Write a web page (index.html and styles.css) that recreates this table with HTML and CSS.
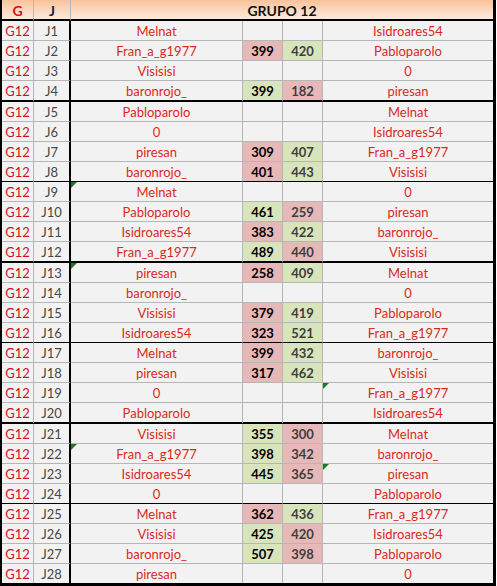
FILE: index.html
```html
<!DOCTYPE html>
<html lang="es">
<head>
<meta charset="utf-8">
<title>Grupo 12</title>
<link rel="stylesheet" href="styles.css">
</head>
<body>
<div class="sheet">
  <div class="row head">
    <div class="c hg">G</div>
    <div class="c hj">J</div>
    <div class="c ht">GRUPO 12</div>
  </div>

  <div class="row"><div class="c g">G12</div><div class="c j">J1</div><div class="c n">Melnat</div><div class="c s s1"></div><div class="c s s2"></div><div class="c n a">Isidroares54</div></div>
  <div class="row"><div class="c g">G12</div><div class="c j">J2</div><div class="c n">Fran_a_g1977</div><div class="c s s1 lo">399</div><div class="c s s2 hi">420</div><div class="c n a">Pabloparolo</div></div>
  <div class="row"><div class="c g">G12</div><div class="c j">J3</div><div class="c n">Visisisi</div><div class="c s s1"></div><div class="c s s2"></div><div class="c n a">0</div></div>
  <div class="row thick"><div class="c g">G12</div><div class="c j">J4</div><div class="c n">baronrojo_</div><div class="c s s1 hi">399</div><div class="c s s2 lo">182</div><div class="c n a">piresan</div></div>

  <div class="row"><div class="c g">G12</div><div class="c j">J5</div><div class="c n">Pabloparolo</div><div class="c s s1"></div><div class="c s s2"></div><div class="c n a">Melnat</div></div>
  <div class="row"><div class="c g">G12</div><div class="c j">J6</div><div class="c n">0</div><div class="c s s1"></div><div class="c s s2"></div><div class="c n a">Isidroares54</div></div>
  <div class="row"><div class="c g">G12</div><div class="c j">J7</div><div class="c n">piresan</div><div class="c s s1 lo">309</div><div class="c s s2 hi">407</div><div class="c n a">Fran_a_g1977</div></div>
  <div class="row thin"><div class="c g">G12</div><div class="c j">J8</div><div class="c n">baronrojo_</div><div class="c s s1 lo">401</div><div class="c s s2 hi">443</div><div class="c n a">Visisisi</div></div>

  <div class="row"><div class="c g">G12</div><div class="c j">J9</div><div class="c n note">Melnat</div><div class="c s s1"></div><div class="c s s2"></div><div class="c n a">0</div></div>
  <div class="row"><div class="c g">G12</div><div class="c j">J10</div><div class="c n">Pabloparolo</div><div class="c s s1 hi">461</div><div class="c s s2 lo">259</div><div class="c n a">piresan</div></div>
  <div class="row"><div class="c g">G12</div><div class="c j">J11</div><div class="c n">Isidroares54</div><div class="c s s1 lo">383</div><div class="c s s2 hi">422</div><div class="c n a">baronrojo_</div></div>
  <div class="row thick"><div class="c g">G12</div><div class="c j">J12</div><div class="c n">Fran_a_g1977</div><div class="c s s1 hi">489</div><div class="c s s2 lo">440</div><div class="c n a">Visisisi</div></div>

  <div class="row"><div class="c g">G12</div><div class="c j">J13</div><div class="c n note">piresan</div><div class="c s s1 lo">258</div><div class="c s s2 hi">409</div><div class="c n a">Melnat</div></div>
  <div class="row"><div class="c g">G12</div><div class="c j">J14</div><div class="c n">baronrojo_</div><div class="c s s1"></div><div class="c s s2"></div><div class="c n a">0</div></div>
  <div class="row"><div class="c g">G12</div><div class="c j">J15</div><div class="c n">Visisisi</div><div class="c s s1 lo">379</div><div class="c s s2 hi">419</div><div class="c n a">Pabloparolo</div></div>
  <div class="row thin"><div class="c g">G12</div><div class="c j">J16</div><div class="c n">Isidroares54</div><div class="c s s1 lo">323</div><div class="c s s2 hi">521</div><div class="c n a">Fran_a_g1977</div></div>

  <div class="row"><div class="c g">G12</div><div class="c j">J17</div><div class="c n">Melnat</div><div class="c s s1 lo">399</div><div class="c s s2 hi">432</div><div class="c n a">baronrojo_</div></div>
  <div class="row"><div class="c g">G12</div><div class="c j">J18</div><div class="c n">piresan</div><div class="c s s1 lo">317</div><div class="c s s2 hi">462</div><div class="c n a">Visisisi</div></div>
  <div class="row"><div class="c g">G12</div><div class="c j">J19</div><div class="c n">0</div><div class="c s s1"></div><div class="c s s2"></div><div class="c n a note">Fran_a_g1977</div></div>
  <div class="row thick"><div class="c g">G12</div><div class="c j">J20</div><div class="c n">Pabloparolo</div><div class="c s s1"></div><div class="c s s2"></div><div class="c n a">Isidroares54</div></div>

  <div class="row"><div class="c g">G12</div><div class="c j">J21</div><div class="c n">Visisisi</div><div class="c s s1 hi">355</div><div class="c s s2 lo">300</div><div class="c n a">Melnat</div></div>
  <div class="row"><div class="c g">G12</div><div class="c j">J22</div><div class="c n note">Fran_a_g1977</div><div class="c s s1 hi">398</div><div class="c s s2 lo">342</div><div class="c n a">baronrojo_</div></div>
  <div class="row"><div class="c g">G12</div><div class="c j">J23</div><div class="c n">Isidroares54</div><div class="c s s1 hi">445</div><div class="c s s2 lo">365</div><div class="c n a note">piresan</div></div>
  <div class="row thin"><div class="c g">G12</div><div class="c j">J24</div><div class="c n">0</div><div class="c s s1"></div><div class="c s s2"></div><div class="c n a">Pabloparolo</div></div>

  <div class="row"><div class="c g">G12</div><div class="c j">J25</div><div class="c n">Melnat</div><div class="c s s1 lo">362</div><div class="c s s2 hi">436</div><div class="c n a">Fran_a_g1977</div></div>
  <div class="row"><div class="c g">G12</div><div class="c j">J26</div><div class="c n">Visisisi</div><div class="c s s1 hi">425</div><div class="c s s2 lo">420</div><div class="c n a">Isidroares54</div></div>
  <div class="row"><div class="c g">G12</div><div class="c j">J27</div><div class="c n">baronrojo_</div><div class="c s s1 hi">507</div><div class="c s s2 lo">398</div><div class="c n a">Pabloparolo</div></div>
  <div class="row last"><div class="c g">G12</div><div class="c j">J28</div><div class="c n">piresan</div><div class="c s s1"></div><div class="c s s2"></div><div class="c n a">0</div></div>
</div>
</body>
</html>
```

FILE: styles.css
```css
html, body {
  margin: 0;
  padding: 0;
  background: #ffffff;
}

.sheet {
  width: 491px;
  border-left: 2px solid #000;
  border-right: 3px solid #000;
  border-bottom: 3px solid #000;
  font-family: Lato, "Noto Sans", "Liberation Sans", sans-serif;
  font-size: 13px;
}

.row {
  display: grid;
  grid-template-columns: 32px 37px 172px 40px 40px 170px;
}

.c {
  height: 17px;
  padding-top: 2px;
  line-height: 17px;
  text-align: center;
  white-space: nowrap;
  overflow: hidden;
  background: #f2f2f2;
  border-right: 1px solid #b6b6b6;
  border-bottom: 1px solid #b6b6b6;
  position: relative;
}

.c.j {
  border-right: 2px solid #000;
  color: #4a4640;
}

.c.a {
  border-right: 0;
}

.g {
  color: #d0121f;
}

.n {
  color: #d92a1c;
}

.s {
  font-weight: 700;
}

.s1 {
  color: #000;
}

.s2 {
  color: #3e3e3e;
}

.lo {
  background: #e6b8b7;
}

.hi {
  background: #d8e4bc;
}

.row.thick .c {
  border-bottom: 2px solid #000;
}

.row.thin .c {
  border-bottom: 1px solid #000;
}

.row.last .c {
  border-bottom: 0;
}

.head .c {
  background: linear-gradient(to bottom, #f9c29a 0%, #fbd9c0 55%, #fde9dc 100%);
  border-bottom: 2px solid #000;
  font-weight: 700;
  font-size: 14px;
}

.head .hg {
  color: #d0121f;
}

.head .hj {
  color: #1c1c3c;
}

.head .ht {
  grid-column: 3 / 7;
  border-right: 0;
  color: #111;
}

.note::before {
  content: "";
  position: absolute;
  left: 0;
  top: 0;
  width: 0;
  height: 0;
  border-top: 6px solid #1e7a1e;
  border-right: 6px solid transparent;
}
```
